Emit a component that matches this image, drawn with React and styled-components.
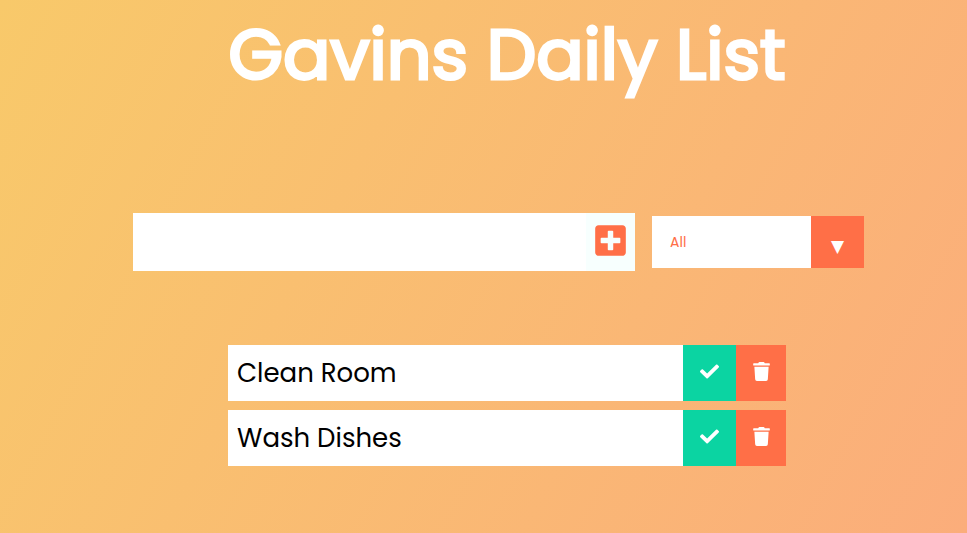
import React, { useState } from "react";
import styled, { createGlobalStyle } from "styled-components";
import { FaCheck, FaPlusSquare, FaTrash } from "react-icons/fa";

const coral = "#ff6f47";
const green = "#0bd4a2";
const fontStack = 'Poppins, Inter, "Liberation Sans", sans-serif';

const GlobalStyle = createGlobalStyle`
  * {
    box-sizing: border-box;
    margin: 0;
    padding: 0;
  }
  body {
    min-height: 100vh;
    background: linear-gradient(118deg, #f8c96a, #fbad7b);
    color: #000;
    font-family: ${fontStack};
  }
`;

const Page = styled.div`
  display: flex;
  flex-direction: column;
  align-items: center;
  padding: 0 0 48px 47px;
`;

const Title = styled.h1`
  padding-top: 11px;
  color: #fff;
  font-size: 70px;
  font-weight: 400;
  line-height: 88px;
  white-space: nowrap;
  -webkit-text-stroke: 3px #fff;
  paint-order: stroke fill;
`;

const Form = styled.form`
  display: flex;
  align-items: center;
  justify-content: center;
  width: 100%;
  margin-top: 114px;
`;

const Field = styled.div`
  display: flex;
  flex: 0 1 502px;
  min-width: 0;
  height: 58px;
`;

const TextInput = styled.input`
  flex: 1;
  min-width: 0;
  padding: 8px;
  border: none;
  outline: none;
  background: #fff;
  font: 400 26px ${fontStack};
`;

const AddButton = styled.button`
  display: flex;
  align-items: center;
  justify-content: center;
  width: 49px;
  padding-bottom: 3px;
  border: none;
  background: #f7fffe;
  color: ${coral};
  font-size: 35px;
  cursor: pointer;
`;

const SelectBox = styled.div`
  position: relative;
  flex: 0 0 212px;
  margin: 0 17px;
`;

const Select = styled.select`
  display: block;
  width: 100%;
  height: 52px;
  padding: 0 64px 0 18px;
  border: none;
  border-radius: 0;
  outline: none;
  appearance: none;
  background: #fff;
  color: ${coral};
  font: 400 14px ${fontStack};
  cursor: pointer;
`;

const Arrow = styled.span`
  position: absolute;
  top: 0;
  right: 0;
  display: flex;
  align-items: center;
  justify-content: center;
  width: 53px;
  height: 100%;
  padding-top: 7px;
  background: ${coral};
  color: #fff;
  font: 17px "DejaVu Sans", sans-serif;
  pointer-events: none;
`;

const List = styled.ul`
  display: flex;
  flex-direction: column;
  gap: 9px;
  width: 558px;
  max-width: 100%;
  margin-top: 74px;
  list-style: none;
`;

const Item = styled.li`
  display: flex;
  height: 56px;
  background: #fff;
`;

const ItemText = styled.span`
  flex: 1;
  padding-left: 9px;
  font-size: 26px;
  line-height: 56px;
  opacity: ${({ $done }) => ($done ? 0.5 : 1)};
  text-decoration: ${({ $done }) => ($done ? "line-through" : "none")};
`;

const ItemButton = styled.button`
  display: flex;
  align-items: center;
  justify-content: center;
  width: ${({ $width }) => $width};
  padding-bottom: 3px;
  border: none;
  background: ${({ $color }) => $color};
  color: #fff;
  font-size: 19px;
  cursor: pointer;
`;

export default function App() {
  const [todos, setTodos] = useState([
    { id: 1, text: "Clean Room", done: false },
    { id: 2, text: "Wash Dishes", done: false },
  ]);
  const [draft, setDraft] = useState("");
  const [filter, setFilter] = useState("all");

  const addTodo = (event) => {
    event.preventDefault();
    if (!draft.trim()) return;
    setTodos([...todos, { id: Date.now(), text: draft, done: false }]);
    setDraft("");
  };
  const toggle = (id) =>
    setTodos(todos.map((t) => (t.id === id ? { ...t, done: !t.done } : t)));
  const remove = (id) => setTodos(todos.filter((t) => t.id !== id));

  const visible = todos.filter(
    (t) => filter === "all" || (filter === "completed") === t.done
  );

  return (
    <>
      <GlobalStyle />
      <Page>
        <header>
          <Title>Gavins Daily List</Title>
        </header>
        <Form onSubmit={addTodo}>
          <Field>
            <TextInput
              type="text"
              aria-label="New item"
              value={draft}
              onChange={(e) => setDraft(e.target.value)}
            />
            <AddButton type="submit" aria-label="Add item">
              <FaPlusSquare />
            </AddButton>
          </Field>
          <SelectBox>
            <Select
              aria-label="Filter items"
              value={filter}
              onChange={(e) => setFilter(e.target.value)}
            >
              <option value="all">All</option>
              <option value="completed">Completed</option>
              <option value="uncompleted">Uncompleted</option>
            </Select>
            <Arrow aria-hidden="true">▼</Arrow>
          </SelectBox>
        </Form>
        <List>
          {visible.map((todo) => (
            <Item key={todo.id}>
              <ItemText $done={todo.done}>{todo.text}</ItemText>
              <ItemButton
                type="button"
                $width="53px"
                $color={green}
                aria-label={`Complete ${todo.text}`}
                onClick={() => toggle(todo.id)}
              >
                <FaCheck />
              </ItemButton>
              <ItemButton
                type="button"
                $width="50px"
                $color={coral}
                aria-label={`Delete ${todo.text}`}
                onClick={() => remove(todo.id)}
              >
                <FaTrash />
              </ItemButton>
            </Item>
          ))}
        </List>
      </Page>
    </>
  );
}
